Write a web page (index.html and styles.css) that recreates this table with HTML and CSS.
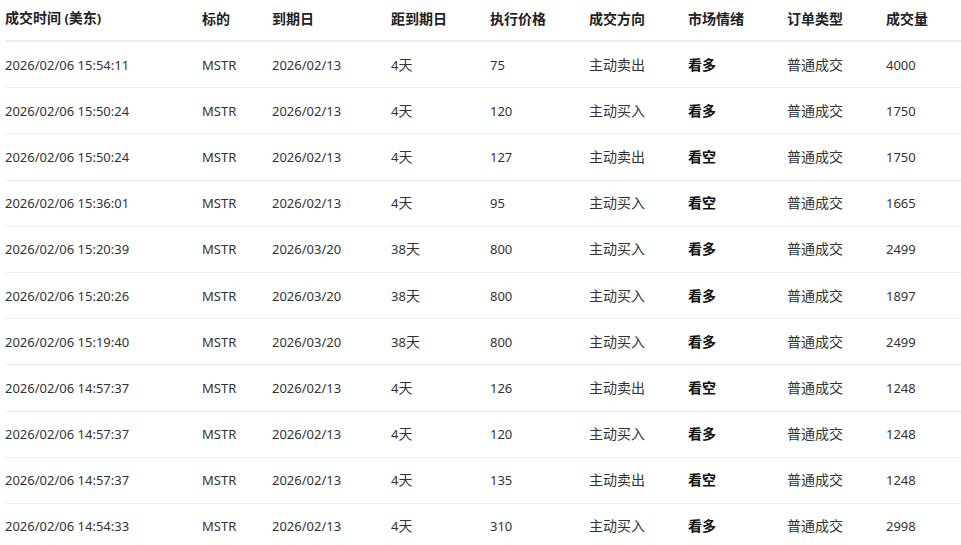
FILE: index.html
```html
<!DOCTYPE html>
<html lang="zh-CN">
<head>
<meta charset="utf-8">
<link rel="stylesheet" href="styles.css">
</head>
<body>
<div class="wrap">
<table class="trades">
<colgroup>
<col class="c-time"><col class="c-sym"><col class="c-exp"><col class="c-days"><col class="c-strike"><col class="c-side"><col class="c-mood"><col class="c-type"><col class="c-vol">
</colgroup>
<thead>
<tr><th><span class="zh">成交时间</span> (<span class="zh">美东</span>)</th><th class="zh">标的</th><th class="zh">到期日</th><th class="zh">距到期日</th><th class="zh">执行价格</th><th class="zh">成交方向</th><th class="zh">市场情绪</th><th class="zh">订单类型</th><th class="zh">成交量</th></tr>
</thead>
<tbody>
<tr><td>2026/02/06 15:54:11</td><td>MSTR</td><td>2026/02/13</td><td>4<span class="zh">天</span></td><td>75</td><td class="zh">主动卖出</td><td class="zh mood">看多</td><td class="zh">普通成交</td><td>4000</td></tr>
<tr><td>2026/02/06 15:50:24</td><td>MSTR</td><td>2026/02/13</td><td>4<span class="zh">天</span></td><td>120</td><td class="zh">主动买入</td><td class="zh mood">看多</td><td class="zh">普通成交</td><td>1750</td></tr>
<tr><td>2026/02/06 15:50:24</td><td>MSTR</td><td>2026/02/13</td><td>4<span class="zh">天</span></td><td>127</td><td class="zh">主动卖出</td><td class="zh mood">看空</td><td class="zh">普通成交</td><td>1750</td></tr>
<tr><td>2026/02/06 15:36:01</td><td>MSTR</td><td>2026/02/13</td><td>4<span class="zh">天</span></td><td>95</td><td class="zh">主动买入</td><td class="zh mood">看空</td><td class="zh">普通成交</td><td>1665</td></tr>
<tr><td>2026/02/06 15:20:39</td><td>MSTR</td><td>2026/03/20</td><td>38<span class="zh">天</span></td><td>800</td><td class="zh">主动买入</td><td class="zh mood">看多</td><td class="zh">普通成交</td><td>2499</td></tr>
<tr><td>2026/02/06 15:20:26</td><td>MSTR</td><td>2026/03/20</td><td>38<span class="zh">天</span></td><td>800</td><td class="zh">主动买入</td><td class="zh mood">看多</td><td class="zh">普通成交</td><td>1897</td></tr>
<tr><td>2026/02/06 15:19:40</td><td>MSTR</td><td>2026/03/20</td><td>38<span class="zh">天</span></td><td>800</td><td class="zh">主动买入</td><td class="zh mood">看多</td><td class="zh">普通成交</td><td>2499</td></tr>
<tr><td>2026/02/06 14:57:37</td><td>MSTR</td><td>2026/02/13</td><td>4<span class="zh">天</span></td><td>126</td><td class="zh">主动卖出</td><td class="zh mood">看空</td><td class="zh">普通成交</td><td>1248</td></tr>
<tr><td>2026/02/06 14:57:37</td><td>MSTR</td><td>2026/02/13</td><td>4<span class="zh">天</span></td><td>120</td><td class="zh">主动买入</td><td class="zh mood">看多</td><td class="zh">普通成交</td><td>1248</td></tr>
<tr><td>2026/02/06 14:57:37</td><td>MSTR</td><td>2026/02/13</td><td>4<span class="zh">天</span></td><td>135</td><td class="zh">主动卖出</td><td class="zh mood">看空</td><td class="zh">普通成交</td><td>1248</td></tr>
<tr><td>2026/02/06 14:54:33</td><td>MSTR</td><td>2026/02/13</td><td>4<span class="zh">天</span></td><td>310</td><td class="zh">主动买入</td><td class="zh mood">看多</td><td class="zh">普通成交</td><td>2998</td></tr>
</tbody>
</table>
</div>
</body>
</html>
```
FILE: styles.css
```css
html, body {
  margin: 0;
  padding: 0;
  background: #fff;
  overflow: hidden;
}
body {
  font-family: "Noto Sans", "Noto Sans CJK SC", sans-serif;
  font-size: 13px;
  color: #333;
}
.zh {
  font-family: "Noto Sans CJK SC", sans-serif;
  font-size: 14px;
}
span.zh {
  line-height: 1;
}
.wrap {
  padding-left: 5px;
}
.trades {
  width: 956px;
  border-collapse: collapse;
  table-layout: fixed;
}
.c-time { width: 197px; }
.c-sym { width: 70px; }
.c-exp { width: 119px; }
.c-days, .c-strike, .c-side, .c-mood, .c-type { width: 99px; }
.c-vol { width: 75px; }
.trades th {
  text-align: left;
  font-weight: 700;
  color: #222;
  padding: 9px 0 13px;
  line-height: 18px;
  border-bottom: 2px solid #eeeeee;
}
.trades td {
  padding: 0;
  height: 45.2px;
  line-height: 18px;
  border-bottom: 1px solid #eeeeee;
  white-space: nowrap;
}
.trades td.zh {
  padding-bottom: 2px;
  height: 43.2px;
}
.trades td.mood {
  font-weight: 700;
  color: #111;
}
```
